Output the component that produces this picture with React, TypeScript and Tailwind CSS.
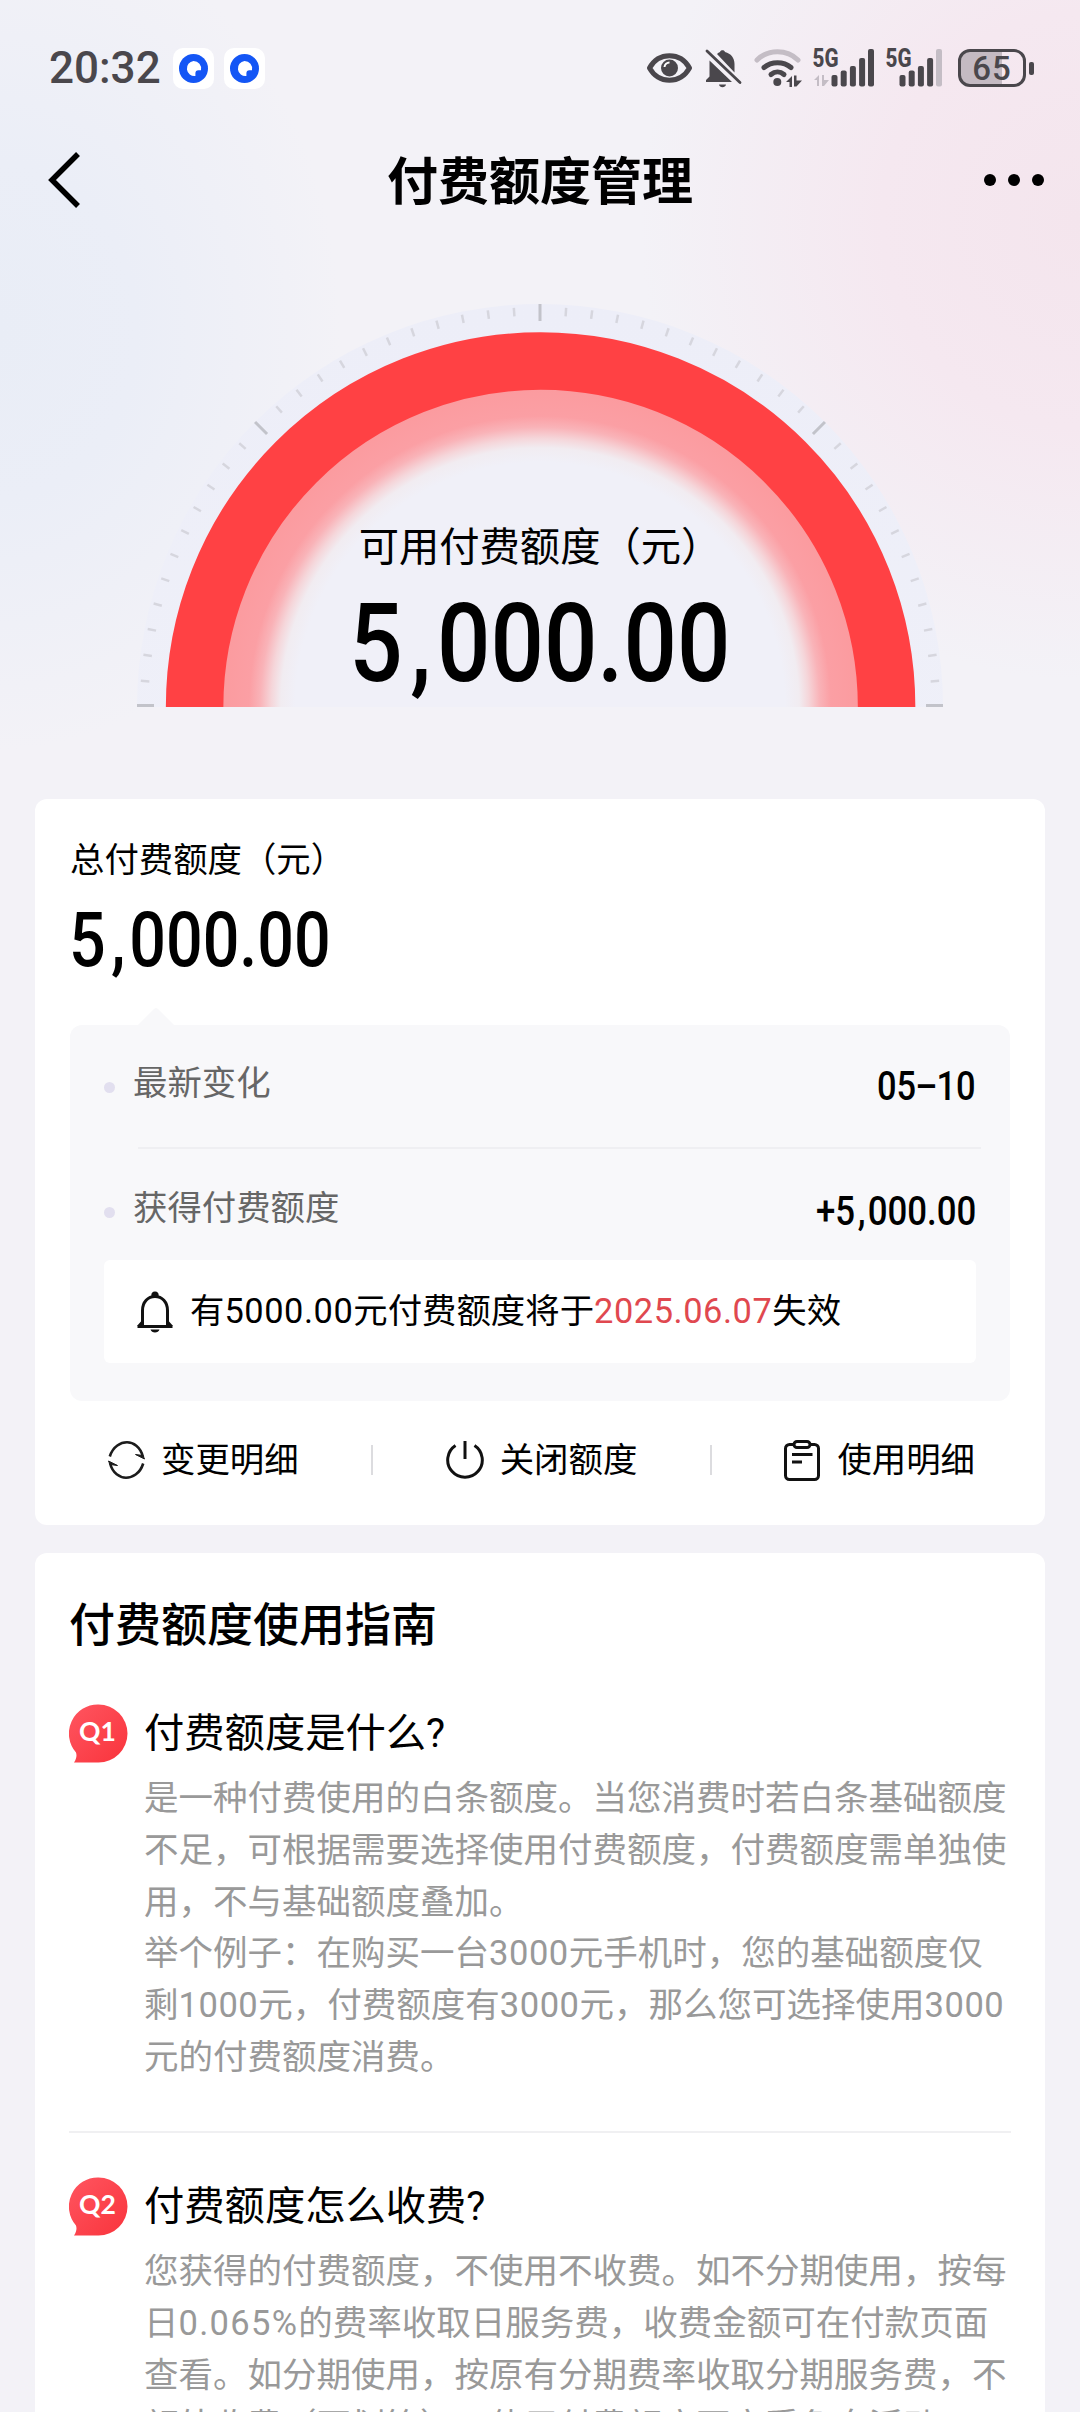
import clsx from "clsx";

const INK = "#4a474c";

const guide = [
  {
    tag: "Q1",
    title: "付费额度是什么?",
    lines: [
      "是一种付费使用的白条额度。当您消费时若白条基础额度",
      "不足，可根据需要选择使用付费额度，付费额度需单独使",
      "用，不与基础额度叠加。",
      "举个例子：在购买一台3000元手机时，您的基础额度仅",
      "剩1000元，付费额度有3000元，那么您可选择使用3000",
      "元的付费额度消费。",
    ],
  },
  {
    tag: "Q2",
    title: "付费额度怎么收费?",
    lines: [
      "您获得的付费额度，不使用不收费。如不分期使用，按每",
      "日0.065%的费率收取日服务费，收费金额可在付款页面",
      "查看。如分期使用，按原有分期费率收取分期服务费，不",
      "额外收费（不划算）。使用付费额度不享受免息活动，",
    ],
  },
];

const AppBadge = () => (
  <div className="flex h-[41px] w-[41px] items-center justify-center rounded-[10px] bg-white">
    <svg width="29" height="29" viewBox="0 0 29 29">
      <circle cx="14.5" cy="14.5" r="14.5" fill="#1456f5" />
      <path d="M14.5 7a7.6 7.6 0 0 1 7.5 9.2h-2.6a3 3 0 0 0-3 3V22A7.5 7.5 0 1 1 14.5 7Z" fill="#fff" />
    </svg>
  </div>
);

const Signal = ({ weak }: { weak?: boolean }) => (
  <svg className="overflow-visible" width="61" height="38" viewBox="0 0 61 38" fill={INK}>
    <text x="-0.5" y="18" fontSize="25" fontWeight="800" fontFamily="Roboto" textLength="26" lengthAdjust="spacingAndGlyphs">
      5G
    </text>
    {!weak && (
      <path d="M1 31l5-5v11H4v-6zM9 26h2v5h5l-5 6H9z" fill="#c4bdc5" />
    )}
    <g transform={weak ? "translate(-5 0)" : undefined}>
      <rect x="18.500" y="26" width="6" height="11.500" rx="2" />
      <rect x="27.700" y="21.500" width="6" height="16" rx="2" />
      <rect x="36.900" y="17" width="6" height="20.500" rx="2" />
      <rect x="46.100" y="9" width="6" height="28.500" rx="2" />
      <rect x="55" y="0" width="6" height="37.500" rx="2" fill={weak ? "#c4bdc5" : INK} />
    </g>
  </svg>
);

const StatusBar = () => (
  <div className="flex h-[42px] items-center pl-[49px] text-[#4a474c]">
    <span className="w-[124px] text-[44px] leading-[42px] font-medium">20:32</span>
    <AppBadge />
    <div className="w-[10px]" />
    <AppBadge />
    <svg className="ml-[382px]" width="45" height="30" viewBox="0 0 45 30">
      <path d="M2.500 15C7 7 14 2.800 22.500 2.800S38 7 42.500 15C38 23 31 27.200 22.500 27.200S7 23 2.500 15Z" fill="none" stroke={INK} strokeWidth="5" strokeLinejoin="round" />
      <circle cx="22.500" cy="15" r="8.500" fill={INK} />
      <path d="M17.500 14a5 5 0 0 1 5-4.500" fill="none" stroke="#fff" strokeWidth="2" />
    </svg>
    <svg className="ml-[13px]" width="37" height="40" viewBox="0 0 37 40" fill={INK}>
      <path d="M4.500 12.500L27 34H1v-2l3.500-3.500zM12 6c1-1 2-1.600 3-2 .5-2.500 4.500-2.500 5 0 6 1.500 9.500 6 9.500 12v8.500zM14 36.500h7c-.5 3.500-6.500 3.500-7 0z" />
      <path d="M2 3l33 31.500" stroke={INK} strokeWidth="2.800" strokeLinecap="round" />
    </svg>
    <svg className="ml-[12px]" width="48" height="38" viewBox="0 0 48 38" fill="none" strokeWidth="5" strokeLinecap="round">
      <path d="M3 11C14 0 33 0 44 11" stroke="#c4bdc5" />
      <path d="M10 18.500c7.500-6.500 19.500-6.500 27 0" stroke={INK} />
      <path d="M17 25.500c4-3.500 9-3.500 13 0" stroke={INK} />
      <circle cx="23.300" cy="33" r="4" fill={INK} />
      <path d="M32 33l6-6v11h-2.500v-5zM40 26.500h2.500v5H48l-5.500 6H40z" fill={INK} />
    </svg>
    <div className="ml-[11px]"><Signal /></div>
    <div className="ml-[12px]"><Signal weak /></div>
    <div className="ml-[11px] flex h-[38px] w-[68px] items-center justify-center rounded-[12px] border-[3.500px] border-[#4a474c] bg-[linear-gradient(90deg,#c4bac2_66%,transparent_66%)] text-[33px] leading-none font-medium tracking-[1px]">
      65
    </div>
    <div className="ml-[3px] h-[13px] w-[5px] rounded-[2px] bg-[#4a474c]" />
  </div>
);

const Amount = ({ prefix = "", className }: { prefix?: string; className: string }) => (
  <div className={clsx("whitespace-nowrap", className)}>
    {prefix}5<span className="mr-[0.06em] ml-[0.08em]">,</span>000.00
  </div>
);

// digits run slightly wider than Roboto's own advance
const Spaced = ({ text }: { text: string }) => (
  <>
    {text.split(/([\d.%]+)/).map((part, i) =>
      i % 2 ? (
        <span key={i} className={part.endsWith("%") ? "tracking-[1.300px]" : "tracking-[0.550px]"}>
          {part}
        </span>
      ) : (
        part
      ),
    )}
  </>
);

const Gauge = () => (
  <svg className="block" width="808" height="404" viewBox="0 0 808 404">
    <defs>
      <radialGradient id="glow" gradientUnits="userSpaceOnUse" cx="404" cy="404" r="318">
        <stop offset="0.77" stopColor="#f0f0f8" />
        <stop offset="0.815" stopColor="#f1ecf1" />
        <stop offset="0.845" stopColor="#f5d6da" />
        <stop offset="0.88" stopColor="#f9b3b8" />
        <stop offset="0.915" stopColor="#fb9fa4" />
        <stop offset="1" stopColor="#fb9b9f" />
      </radialGradient>
      <linearGradient id="band" x1="0" y1="0" x2="0" y2="1">
        <stop offset="0" stopColor="#edeef8" />
        <stop offset="1" stopColor="#f0f1f9" />
      </linearGradient>
    </defs>
    <circle cx="404" cy="404" r="403" fill="url(#band)" />
    {Array.from({ length: 49 }, (_, i) => {
      const major = i % 12 === 0;
      const edge = i === 0 ? -1.5 : i === 48 ? 1.5 : 0;
      return (
        <line
          key={i}
          x1={major ? 1 : 4}
          x2={major ? 18 : 12.500}
          y1={404 + edge}
          y2={404 + edge}
          stroke={major ? "#c2c3ca" : "#d6d6de"}
          strokeWidth={major ? 3 : 2.500}
          transform={`rotate(${i * 3.75} 404 404)`}
        />
      );
    })}
    <circle cx="404.600" cy="404" r="346" fill="url(#glow)" stroke="#ff4144" strokeWidth="57.500" />
  </svg>
);

const BellIcon = () => (
  <svg width="36" height="42" viewBox="0 0 36 42" fill="none" stroke="#111" strokeWidth="3">
    <path d="M5.500 34.500V19.500C5.500 11 11 5.500 18 5.500S30.500 11 30.500 19.500v15" />
    <path d="M0.500 35.500h35" />
    <path d="M18 .500a3.500 3.500 0 0 1 3.500 4.500h-7A3.500 3.500 0 0 1 18 .500zM13.500 38.500h9c-1 4-8 4-9 0z" fill="#111" stroke="none" />
    <path d="M5.500 31L1.500 35.500M30.500 31l4 4.500" />
  </svg>
);

const RefreshIcon = () => (
  <svg width="37" height="38" viewBox="0 0 37 38" fill="none" stroke="#1c1c1c" strokeWidth="2.600">
    <path d="M1.800 15.500C5 5 13 1.300 19 1.300S32.500 5.500 35 16" />
    <path d="M35.200 22.500C32 33 24 36.700 18 36.700S4.500 32.500 2 22" />
    <path d="M27.500 13.500l7.500 1 1.500 3.500zM9.500 24.500l-7.500-1L.500 20z" fill="#1c1c1c" strokeWidth="1" />
  </svg>
);

const PowerIcon = () => (
  <svg width="38" height="40" viewBox="0 0 38 40" fill="none" stroke="#111" strokeWidth="3">
    <path d="M9.500 5.500a17.300 17.300 0 1 0 19 0" />
    <path d="M19 1v18" />
  </svg>
);

const ListIcon = () => (
  <svg width="36" height="41" viewBox="0 0 36 41" fill="none" stroke="#111" strokeWidth="3">
    <path d="M10 4.500H5.500a4 4 0 0 0-4 4v27a4 4 0 0 0 4 4h25a4 4 0 0 0 4-4v-27a4 4 0 0 0-4-4H26" />
    <rect x="10" y="1.500" width="16" height="6" rx="3" />
    <path d="M8 14.500h20.500M8 22h10" />
  </svg>
);

const Row = ({ label, children }: { label: string; children: React.ReactNode }) => (
  <div className="flex h-[42px] items-center">
    <div className="mt-[8px] h-[11px] w-[11px] rounded-full bg-[#e2dfef]" />
    <span className="ml-[18px] flex-1 text-[34.400px] leading-[42px] text-[#666]">{label}</span>
    {children}
  </div>
);

const Badge = ({ text }: { text: string }) => (
  <svg className="block shrink-0" width="59" height="59" viewBox="0 0 59 59">
    <defs>
      <linearGradient id="bubble" x1="0" y1="0" x2="1" y2="1">
        <stop offset="0" stopColor="#ff5560" />
        <stop offset="1" stopColor="#f9343c" />
      </linearGradient>
    </defs>
    <path d="M29.500 0.500a29 29 0 0 1 0 58H5c2.500-4 3-7 2-10A29 29 0 0 1 29.500.500Z" fill="url(#bubble)" />
    <text x="28.500" y="36.500" textAnchor="middle" fill="#fff" fontSize="26.500" fontWeight="700" fontFamily="Lato">
      {text}
    </text>
  </svg>
);

export default function App() {
  return (
    <div className="h-[2412px] w-[1080px] overflow-hidden bg-[#f3f2f7] bg-[radial-gradient(ellipse_340px_420px_at_0px_330px,#e9edf6_0%,#ebeef7_40%,#f3f2f700_100%),radial-gradient(ellipse_440px_460px_at_1080px_220px,#f4e5ed_0%,#f5e8f0_45%,#f3f2f700_100%)] bg-no-repeat font-[Roboto,'Noto_Sans_CJK_SC',sans-serif] text-black [text-spacing-trim:space-all]">
      <div className="pt-[47px]">
        <StatusBar />
      </div>

      <header className="mt-[51px] flex h-[80px] items-center justify-between pr-[35px] pl-[48px]">
        <svg width="48" height="56" viewBox="0 0 48 56" fill="none" stroke="#000" strokeWidth="5.500">
          <path d="M30 2L4 28l26 26" />
        </svg>
        <h1 className="pt-[5px] text-[51px] leading-[75px] font-bold">付费额度管理</h1>
        <div className="flex w-[61px] gap-[12px]">
          <i className="h-[12px] w-[12px] rounded-full bg-black" />
          <i className="h-[12px] w-[12px] rounded-full bg-black" />
          <i className="h-[12px] w-[12px] rounded-full bg-black" />
        </div>
      </header>

      <section className="mt-[83px] grid justify-center">
        <div className="col-start-1 row-start-1">
          <Gauge />
        </div>
        <div className="col-start-1 row-start-1 flex flex-col items-center pt-[220px]">
          <div className="text-[40.300px] leading-[50px]">可用付费额度（元）</div>
          <Amount className="mt-[16px] scale-x-[0.855] text-[110px] leading-[110px] font-[460]" />
        </div>
      </section>

      <section className="mx-[35px] mt-[92px] h-[726px] rounded-[12px] bg-white px-[35px] pt-[36px]">
        <div className="text-[34.400px] leading-[50px]">总付费额度（元）</div>
        <Amount className="mt-[17px] -ml-[1px] w-max origin-left scale-x-[0.850] text-[76px] leading-[76px] font-[460]" />
        <svg className="mt-[29px] ml-[68px] block" width="36" height="18" viewBox="0 0 36 18">
          <path d="M0 18L16 2q2-2 4 0l16 16z" fill="#f8f8fa" />
        </svg>
        <div className="h-[376px] rounded-[12px] bg-[#f8f8fa] px-[34px] pt-[37px]">
          <Row label="最新变化">
            <span className="origin-right scale-x-[0.860] pt-[7px] text-[40px] leading-[42px] font-medium">05<span className="-mx-[1px]">–</span>10</span>
          </Row>
          <div className="mt-[43px] -mr-[5px] ml-[34px] h-[2px] bg-[#efeff2]" />
          <div className="pt-[38px]">
            <Row label="获得付费额度">
              <Amount prefix="+" className="origin-right scale-x-[0.870] pt-[7px] text-[40px] leading-[42px] font-medium" />
            </Row>
          </div>
          <div className="mt-[31px] flex h-[103px] items-center rounded-[6px] bg-white pl-[33px]">
            <BellIcon />
            <span className="ml-[17px] pb-[2px] text-[34.400px] leading-[50px]">
              <Spaced text="有5000.00元付费额度将于" />
              <span className="text-[#e0484f]">
                <Spaced text="2025.06.07" />
              </span>
              失效
            </span>
          </div>
        </div>
        <div className="flex h-[118px] items-center justify-between pr-[35px] pl-[38px] text-[34.400px] leading-[50px]">
          <div className="flex items-center gap-[16px]"><RefreshIcon />变更明细</div>
          <div className="h-[30px] w-[2px] bg-[#dcdcdf]" />
          <div className="flex items-center gap-[16px]"><PowerIcon />关闭额度</div>
          <div className="h-[30px] w-[2px] bg-[#dcdcdf]" />
          <div className="flex items-center gap-[17px]"><ListIcon />使用明细</div>
        </div>
      </section>

      <section className="mx-[35px] mt-[28px] h-[900px] rounded-[12px] bg-white px-[34px] pt-[42px]">
        <h2 className="text-[46px] leading-[60px] font-medium">付费额度使用指南</h2>
        {guide.map((item, i) => (
          <div key={item.tag} className={clsx("flex", i === 0 ? "mt-[49px] h-[427px]" : "border-t-2 border-[#f0f0f2] pt-[44px]")}>
            <Badge text={item.tag} />
            <div className="ml-[16px] pt-[2px] whitespace-nowrap">
              <h3 className="text-[40.300px] leading-[56px]">{item.title}</h3>
              <div className="mt-[11px] text-[34.500px] leading-[51.800px] text-[#999]">
                {item.lines.map((line) => (
                  <p key={line}>
                    <Spaced text={line} />
                  </p>
                ))}
              </div>
            </div>
          </div>
        ))}
      </section>
    </div>
  );
}
